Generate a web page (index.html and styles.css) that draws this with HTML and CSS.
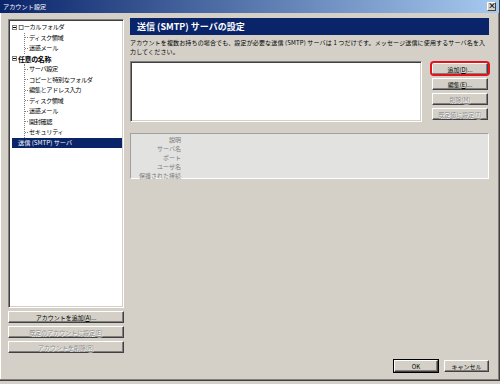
FILE: index.html
```html
<!DOCTYPE html>
<html lang="ja">
<head>
    <meta charset="UTF-8">
    <title>アカウント設定</title>
    <link rel="stylesheet" href="styles.css">
</head>
<body>
    <div class="window">
        <div class="titlebar">
            <span class="title">アカウント設定</span>
            <span class="close">×</span>
        </div>
        <div class="main">
            <div class="left">
                <div class="tree">
                    <div class="node"><span class="exp"></span>ローカルフォルダ</div>
                    <div class="group">
                        <div class="child">ディスク領域</div>
                        <div class="child">迷惑メール</div>
                    </div>
                    <div class="node strong"><span class="exp"></span>任意の名称</div>
                    <div class="group">
                        <div class="child">サーバ設定</div>
                        <div class="child">コピーと特別なフォルダ</div>
                        <div class="child">編集とアドレス入力</div>
                        <div class="child">ディスク領域</div>
                        <div class="child">迷惑メール</div>
                        <div class="child">開封確認</div>
                        <div class="child">セキュリティ</div>
                    </div>
                    <div class="node selected">送信 (SMTP) サーバ</div>
                </div>
                <div class="left-buttons">
                    <button class="btn">アカウントを追加(<u>A</u>)...</button>
                    <button class="btn" disabled>既定のアカウントに設定(<u>E</u>)</button>
                    <button class="btn" disabled>アカウントを削除(<u>R</u>)</button>
                </div>
            </div>
            <div class="right">
                <div class="heading">送信 (SMTP) サーバの設定</div>
                <p class="desc">アカウントを複数お持ちの場合でも、設定が必要な送信 (SMTP) サーバは 1 つだけです。メッセージ送信に使用するサーバ名を入力してください。</p>
                <div class="server-row">
                    <div class="server-list"></div>
                    <div class="server-buttons">
                        <button class="btn marked">追加(<u>D</u>)...</button>
                        <button class="btn">編集(<u>E</u>)...</button>
                        <button class="btn" disabled>削除(<u>M</u>)</button>
                        <button class="btn" disabled>既定値に設定(<u>T</u>)</button>
                    </div>
                </div>
                <div class="details">
                    <div class="label">説明</div>
                    <div class="label">サーバ名</div>
                    <div class="label">ポート</div>
                    <div class="label">ユーザ名</div>
                    <div class="label">保護された接続</div>
                </div>
            </div>
        </div>
        <div class="footer">
            <button class="btn ok">OK</button>
            <button class="btn cancel">キャンセル</button>
        </div>
    </div>
</body>
</html>
```

FILE: styles.css
```css
body {
    margin: 0;
    background-color: #d4d0c8;
    font-family: "Noto Sans CJK JP", "Liberation Sans", sans-serif;
    font-size: 6px;
    color: #000;
}
.window {
    width: 500px;
    height: 381px;
    box-sizing: border-box;
    background-color: #d4d0c8;
    border-right: 1px solid #404040;
    border-bottom: 1px solid #404040;
    box-shadow: inset -1px -1px #808080, inset 1px 0 #fff;
    display: flex;
    flex-direction: column;
}
.titlebar {
    height: 13px;
    flex: none;
    display: flex;
    align-items: center;
    justify-content: space-between;
    padding: 0 2px 0 3px;
    background: linear-gradient(to right, #0a246a, #a6caf0);
    color: #fff;
}
.title {
    font-size: 6.2px;
    line-height: 13px;
}
.close {
    width: 9px;
    height: 9px;
    box-sizing: border-box;
    background-color: #d4d0c8;
    color: #000;
    border: 1px solid;
    border-color: #fff #404040 #404040 #fff;
    font-size: 8px;
    line-height: 6px;
    text-align: center;
    font-weight: bold;
    margin-right: 1px;
}
.main {
    height: 347px;
    flex: none;
    display: flex;
    gap: 6px;
    padding: 6px 0 0 8px;
    box-sizing: border-box;
}
.left {
    width: 116px;
    display: flex;
    flex-direction: column;
}
.tree {
    height: 289px;
    box-sizing: border-box;
    background: #fff;
    border: 1px solid;
    border-color: #808080 #fff #fff #808080;
    box-shadow: inset 1px 1px #404040, inset -1px -1px #d4d0c8;
    padding: 2px 1px 0 2px;
    letter-spacing: -0.4px;
    font-size: 6.2px;
}
.node, .child {
    height: 10.5px;
    line-height: 10.5px;
    white-space: nowrap;
    display: flex;
    align-items: center;
}
/* tree expander box with a minus sign */
.exp {
    width: 5px;
    height: 5px;
    box-sizing: border-box;
    border: 1px solid #808080;
    background: linear-gradient(#000, #000) center / 3px 1px no-repeat;
    margin: 0 1px;
}
.strong {
    font-weight: bold;
    font-size: 7px;
}
.group {
    margin-left: 13px;
    border-left: 1px dotted #808080;
}
.child::before {
    content: "";
    width: 3px;
    border-top: 1px dotted #808080;
    margin-right: 1px;
}
.selected {
    margin-left: 1px;
    padding-left: 6px;
    background-color: #0a246a;
    color: #fff;
    letter-spacing: 0;
}
.left-buttons {
    display: flex;
    flex-direction: column;
    gap: 3px;
    margin-top: 3px;
}
.btn {
    height: 12px;
    padding: 0;
    box-sizing: border-box;
    background-color: #d4d0c8;
    border: 1px solid;
    border-color: #fff #404040 #404040 #fff;
    box-shadow: inset -1px -1px #808080;
    font-family: inherit;
    font-size: 6px;
    line-height: 9px;
    color: #000;
    white-space: nowrap;
}
.btn:disabled {
    color: #8c8c8c;
    text-shadow: 0.5px 0.5px #fff;
}
.right {
    width: 359px;
    margin-top: -1px;
}
.heading {
    height: 17px;
    line-height: 17px;
    padding-left: 7px;
    background-color: #0a246a;
    color: #fff;
    font-weight: bold;
    font-size: 9px;
}
.desc {
    margin: 3px 0 0;
    line-height: 9px;
    height: 18px;
    letter-spacing: 0.15px;
}
.server-row {
    display: flex;
    gap: 10px;
    margin-top: 5px;
}
.server-list {
    flex: 1;
    height: 61px;
    box-sizing: border-box;
    background: #fff;
    border: 1px solid;
    border-color: #808080 #fff #fff #808080;
    box-shadow: inset 1px 1px #404040, inset -1px -1px #d4d0c8;
}
.server-buttons {
    width: 56px;
    margin-right: 1px;
    padding-top: 2px;
    display: flex;
    flex-direction: column;
    gap: 3px;
}
.marked {
    position: relative;
}
.marked::after {
    content: "";
    position: absolute;
    top: -3px;
    bottom: -2px;
    left: -3px;
    right: -3px;
    border: 2px solid #e4141c;
    border-radius: 4px;
}
.details {
    margin-top: 11px;
    height: 46px;
    box-sizing: border-box;
    background-color: #e2e2e0;
    border: 1px solid;
    border-color: #a0a0a0 #fff #fff #a0a0a0;
    padding-top: 1px;
}
.label {
    width: 50px;
    text-align: right;
    line-height: 9px;
    color: #7c7c7c;
}
.footer {
    display: flex;
    justify-content: flex-end;
    gap: 6px;
    padding-right: 10px;
}
.ok {
    width: 44px;
    outline: 1px solid #000;
    outline-offset: 0;
}
.cancel {
    width: 45px;
}
```
